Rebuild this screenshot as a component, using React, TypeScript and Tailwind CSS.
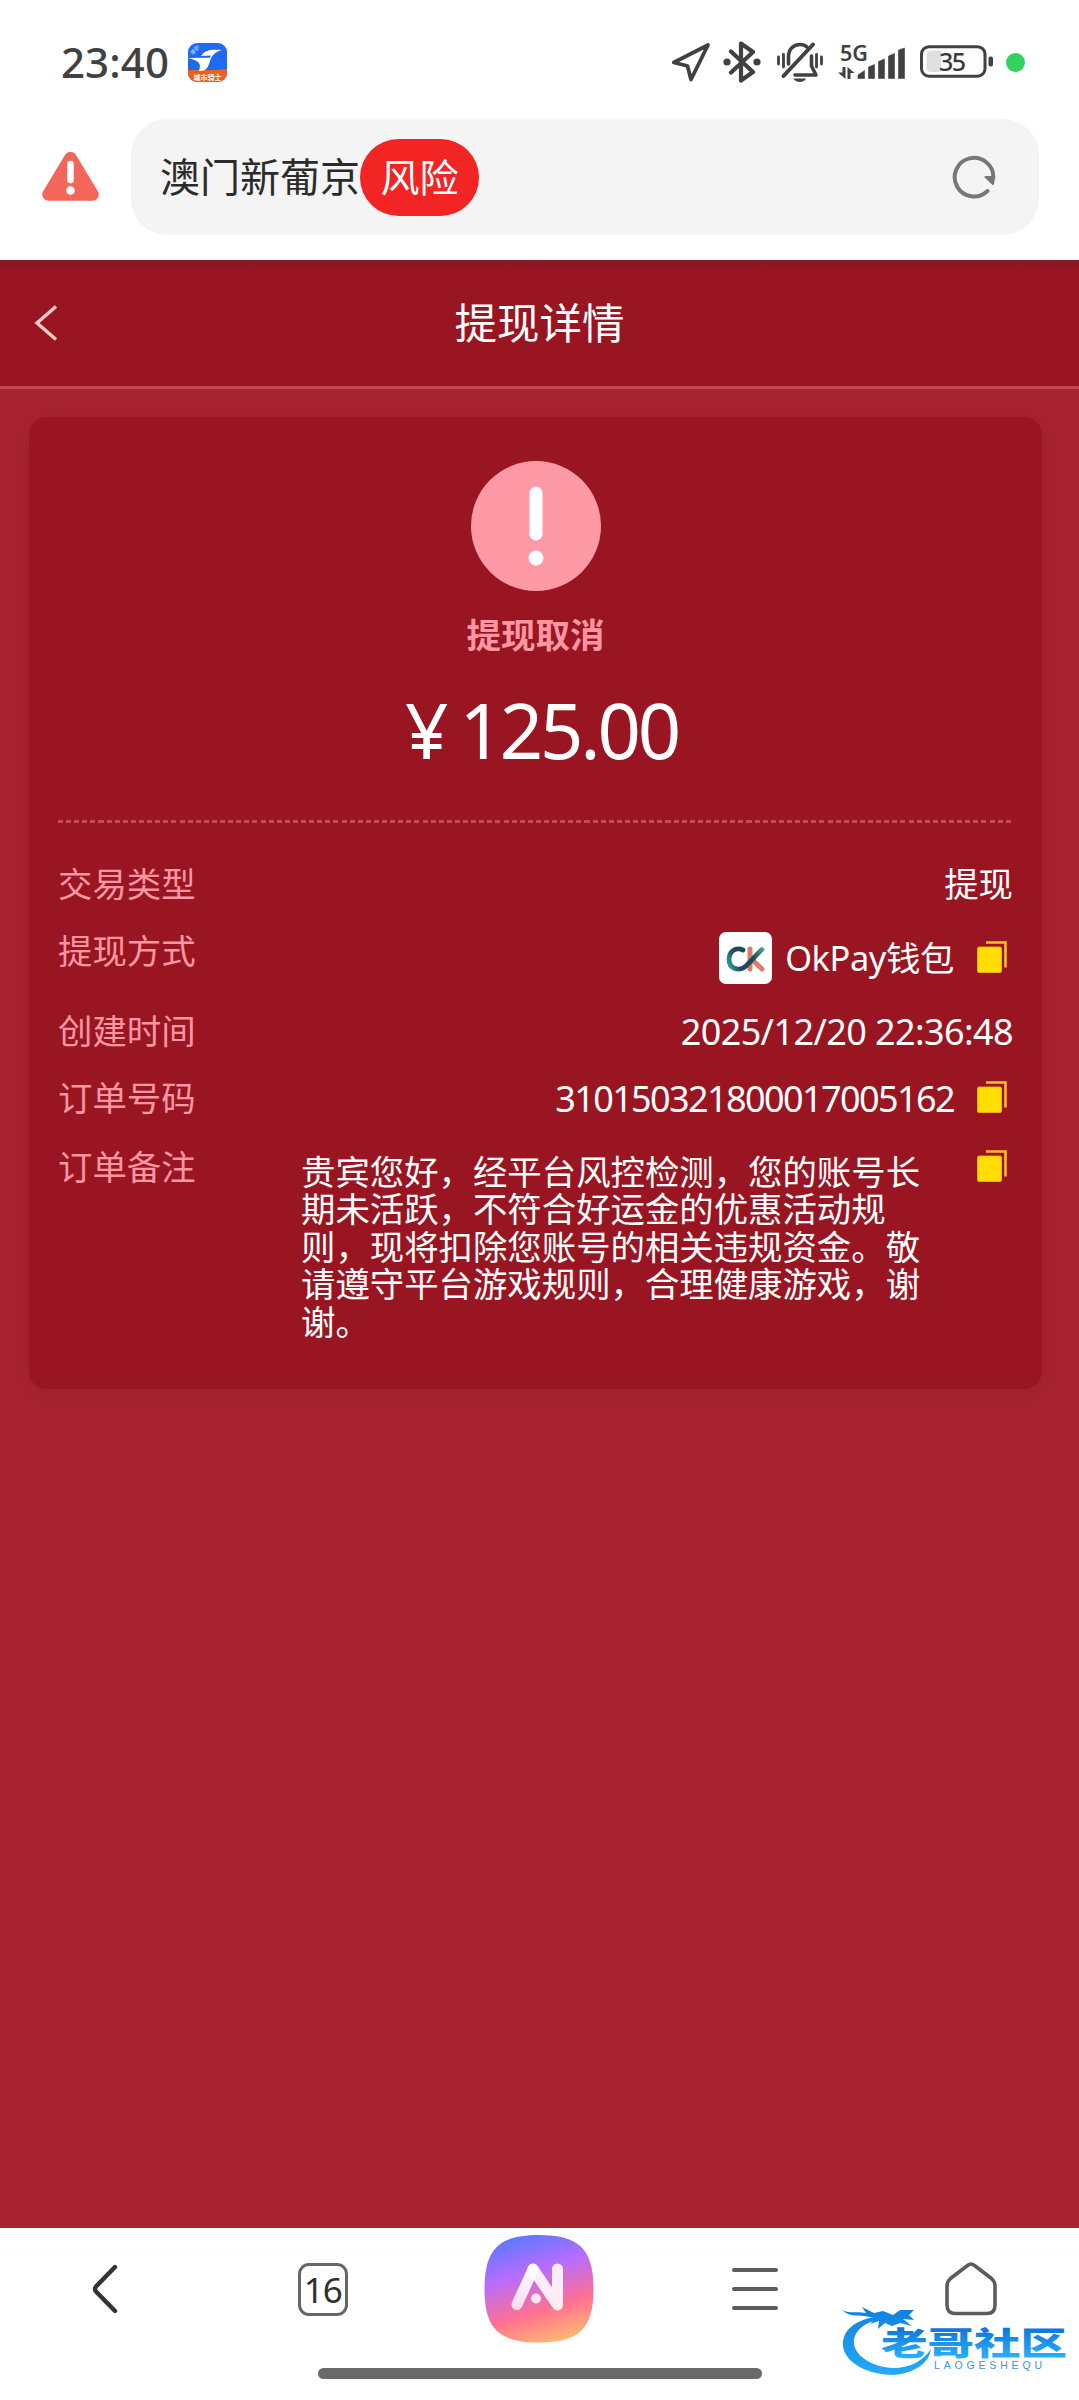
import React from 'react';

const cjk = "font-['Noto_Sans_CJK_SC',sans-serif]";
const latin = "font-['Noto_Sans','Noto_Sans_CJK_SC',sans-serif]";

const DeliveryAppIcon = () => (
  <svg width="39" height="39" viewBox="0 0 39 39">
    <defs>
      <clipPath id="appClip"><rect width="39" height="39" rx="9" /></clipPath>
    </defs>
    <g clipPath="url(#appClip)">
      <rect width="39" height="39" fill="#1d6bf3" />
      <path d="M0 27H27L39 26V39H0Z" fill="#f0601a" />
      <path d="M13 13C17 7 22 6 34 7C27 9 24 12 22 18C20 25 18 28 11 28C13 22 13 18 0 15L14 14.5H22L23 12.5Z" fill="#fff" />
      <path d="M1 14H22" stroke="#1d6bf3" strokeWidth="1.2" />
      <text x="19.5" y="37" textAnchor="middle" fontSize="7" fontWeight="700" fill="#fff" className="font-['Noto_Sans_CJK_SC',sans-serif]">城市骑士</text>
      <text x="7" y="9" textAnchor="middle" fontSize="5.5" fill="#b9d3ff" transform="rotate(-42 7 7)" className="font-['Noto_Sans_CJK_SC',sans-serif]">兼职</text>
    </g>
  </svg>
);

const LocationIcon = () => (
  <svg width="40" height="40" viewBox="0 0 40 40" fill="none" stroke="#414141" strokeWidth="3.8" strokeLinejoin="round">
    <path d="M37 3L2.8 20.5L16.5 24L20 37.5Z" />
  </svg>
);

const BluetoothIcon = () => (
  <svg width="38" height="42" viewBox="0 0 38 42" fill="none" stroke="#414141" strokeWidth="4.2" strokeLinecap="round" strokeLinejoin="round">
    <path d="M8 10.5L30 31L18 39.5V2.5L30 11L8 31.5" />
    <circle cx="4" cy="21" r="3.6" fill="#414141" stroke="none" />
    <circle cx="34" cy="21" r="3.6" fill="#414141" stroke="none" />
  </svg>
);

const MutedBellIcon = () => (
  <svg width="48" height="42" viewBox="0 0 48 42" fill="none" stroke="#414141" strokeWidth="3.6" strokeLinecap="round">
    <path d="M2.5 16V23M7.5 13.5V26M40.5 13.5V26M45.5 16V23" strokeWidth="2.8" />
    <path d="M12.5 23V16C12.5 8 17.5 3.500 24 3.500C27 3.500 29.500 4.500 31 6" />
    <path d="M35.5 15V25L40 34H19" strokeLinejoin="round" />
    <path d="M37 3.5L7.5 35" strokeWidth="4" />
    <path d="M17.5 37.5H30C28.5 42 19 42 17.5 37.5Z" fill="#414141" stroke="none" />
  </svg>
);

const SignalIcon = () => (
  <svg width="68" height="38" viewBox="0 0 68 38" fill="#414141" className="overflow-visible">
    <text x="2" y="17.5" fontSize="22" fontWeight="600" textLength="28" lengthAdjust="spacingAndGlyphs" className="font-['Noto_Sans',sans-serif]">5G</text>
    <path d="M4.500 24H7.500V36L0 29.500H4.500ZM9.500 36V24L16.500 30H12.500V36Z" />
    <path d="M20 35.500V32L26.500 27.500V35.500ZM30.500 24L36.500 21.500V35.500H30.500ZM40.500 18.500L46.500 16V35.500H40.500ZM50.500 13L56.500 10.500V35.500H50.500ZM60.500 7L66.500 5V35.500H60.500Z" stroke="#414141" strokeWidth="0.6" strokeLinejoin="round" />
  </svg>
);

const BatteryIcon = () => (
  <svg width="74" height="34" viewBox="0 0 74 34" className="overflow-visible">
    <rect x="1.5" y="1.7" width="63.5" height="29.5" rx="7.5" fill="#fff" stroke="#414141" strokeWidth="3" />
    <path d="M11 5.500H21V27H11Q6.500 27 6.500 22V11Q6.500 5.500 11 5.500Z" fill="#dfdfdf" />
    <text x="32.5" y="25.500" textAnchor="middle" fontSize="25" fontWeight="500" textLength="27" fill="#3a3a3a" className="font-['Noto_Sans',sans-serif]">35</text>
    <rect x="68.5" y="11.5" width="4.5" height="10" rx="2" fill="#414141" />
  </svg>
);

const WarningIcon = () => (
  <svg width="57" height="50" viewBox="0 0 57 50">
    <path d="M28.5 7L6.500 43.500H50.500Z" fill="#f3665c" stroke="#f3665c" strokeWidth="12.500" strokeLinejoin="round" />
    <path d="M28.5 13V29" stroke="#fff" strokeWidth="6.500" strokeLinecap="round" />
    <circle cx="28.5" cy="39.5" r="4.3" fill="#fff" />
  </svg>
);

const ReloadIcon = () => (
  <svg width="44" height="44" viewBox="0 0 44 44" fill="none" stroke="#777" strokeWidth="4" strokeLinecap="round">
    <path d="M35.5 36A19.300 19.300 0 1 1 41.300 23" />
    <path d="M33.500 22H42L41 29Z" fill="#777" strokeWidth="2" strokeLinejoin="round" />
  </svg>
);

const OkPayIcon = () => (
  <svg width="53" height="52" viewBox="0 0 53 52">
    <defs>
      <linearGradient id="okTeal" x1="8" y1="30" x2="45" y2="14" gradientUnits="userSpaceOnUse">
        <stop offset="0" stopColor="#2f9d90" />
        <stop offset="0.25" stopColor="#20475f" />
        <stop offset="0.65" stopColor="#204a60" />
        <stop offset="1" stopColor="#58b5a0" />
      </linearGradient>
    </defs>
    <rect width="53" height="52" rx="7" fill="#fff" />
    <path d="M31 17V37M33.500 28L43 37" stroke="#dc7c68" strokeWidth="5" strokeLinecap="round" />
    <path d="M24 18C16 14.500 10 20 10 27.500C10 37 20 40 27 34C33 28 38 22 43 17.500" fill="none" stroke="url(#okTeal)" strokeWidth="4.8" strokeLinecap="round" />
  </svg>
);

const CopyIcon = () => (
  <svg width="30" height="32" viewBox="0 0 30 32">
    <rect x="0.5" y="6" width="24" height="25.5" rx="1.5" fill="#fd0" stroke="#f9b81c" strokeWidth="0.8" />
    <path d="M9 1.500H28.500V26.500" fill="none" stroke="#fbbd2e" strokeWidth="2.6" />
  </svg>
);

const AiIcon = () => (
  <svg width="110" height="108" viewBox="0 0 110 108">
    <defs>
      <linearGradient id="aiBg" x1="35" y1="0" x2="68" y2="108" gradientUnits="userSpaceOnUse">
        <stop offset="0" stopColor="#5f78ff" />
        <stop offset="0.33" stopColor="#b56cff" />
        <stop offset="0.7" stopColor="#ff7092" />
        <stop offset="1" stopColor="#ffb671" />
      </linearGradient>
      <linearGradient id="aiLeg" x1="0" y1="30" x2="0" y2="75" gradientUnits="userSpaceOnUse">
        <stop offset="0" stopColor="#fff" />
        <stop offset="1" stopColor="#fff" stopOpacity="0.75" />
      </linearGradient>
    </defs>
    <path d="M55 0C95 0 109.500 14 109.500 54S95 107.500 55 107.500S0.500 94 0.500 54S15 0 55 0Z" fill="url(#aiBg)" />
    <g fill="none" strokeWidth="11" strokeLinecap="round">
      <path d="M49 34L73.500 70V34" stroke="#fff" strokeOpacity="0.88" strokeLinejoin="round" />
      <path d="M33 69.500L49 34.500" stroke="url(#aiLeg)" />
    </g>
    <circle cx="52" cy="63.5" r="5" fill="#ffe6f2" />
  </svg>
);

const HomeIcon = () => (
  <svg width="52" height="54" viewBox="0 0 52 54" fill="none" stroke="#5c5c5c" strokeWidth="3.6">
    <path d="M22.500 3.500Q26 0.800 29.500 3.500L46.500 16.500Q50 19.500 50 24V43Q50 51.500 42 51.500H10Q2 51.500 2 43V24Q2 19.500 5.500 16.500Z" />
  </svg>
);

const DragonLogo = () => (
  <svg width="226" height="76" viewBox="0 0 226 76" className="overflow-visible">
    <defs>
      <linearGradient id="dragon" x1="0" y1="0" x2="0" y2="76" gradientUnits="userSpaceOnUse">
        <stop offset="0" stopColor="#0f7fe0" />
        <stop offset="1" stopColor="#27adfa" />
      </linearGradient>
      <linearGradient id="brand" x1="0" y1="24" x2="0" y2="53" gradientUnits="userSpaceOnUse">
        <stop offset="0" stopColor="#0c78dc" />
        <stop offset="1" stopColor="#2cb0fb" />
      </linearGradient>
    </defs>
    <g fill="url(#dragon)">
      <path d="M32 12C8 16 -1 28 0 41C2 58 25 70 51 70C72 68 86 58 88 44C81 55 68 63 50 63C30 62 13 52 11 39C10 27 20 18 35 15Z" />
      <path d="M-1 5C7 9 15 6 23 8L19 2L31 8L40 6L50 10L57 5L71 5L66 10L71 15L60 14L69 21L57 18L49 21L42 18L35 24L36 16L27 19L33 13L21 11C13 10 7 12 -1 5Z" />
    </g>
    <text x="38" y="50" fontSize="32" fontWeight="900" textLength="186" lengthAdjust="spacingAndGlyphs" fill="url(#brand)" className="font-['Noto_Sans_CJK_SC',sans-serif]">老哥社区</text>
    <text x="91" y="64" fontSize="10.5" textLength="108" fill="#3b94dc" className="font-['Liberation_Sans',sans-serif]">LAOGESHEQU</text>
  </svg>
);

const Row = ({ label, className, labelHeight, children }: {
  label: string;
  className: string;
  labelHeight: string;
  children: React.ReactNode;
}) => (
  <div className={`flex items-start justify-between ${className}`}>
    <span className={`flex items-center pb-[4px] text-[#ff97a2] ${labelHeight}`}>{label}</span>
    {children}
  </div>
);

export default function App() {
  return (
    <div className={`flex h-[2400px] w-[1079px] flex-col overflow-hidden bg-white ${cjk}`}>
      {/* Status bar */}
      <div className="flex h-[119px] items-center justify-between pt-[5px] pr-[54px] pl-[61px] text-[#414141]">
        <div className="flex items-center gap-[20px]">
          <span className={`w-[107px] text-[42px] leading-none font-medium tracking-[0.1px] whitespace-nowrap ${latin}`}>23:40</span>
          <DeliveryAppIcon />
        </div>
        <div className="flex items-center">
          <LocationIcon />
          <span className="ml-[12px]"><BluetoothIcon /></span>
          <span className="ml-[15px]"><MutedBellIcon /></span>
          <span className="ml-[14px]"><SignalIcon /></span>
          <span className="ml-[14px]"><BatteryIcon /></span>
          <span className="ml-[12px] size-[19px] rounded-full bg-[#32d25f]" />
        </div>
      </div>

      {/* Address bar */}
      <div className="flex h-[141px] items-start pl-[42px]">
        <span className="mt-[32px]"><WarningIcon /></span>
        <div className="ml-[32px] flex h-[116px] w-[908px] items-center rounded-[36px] bg-[#f4f4f4] pr-[43px] pl-[29px] text-[40px] leading-none">
          <span className="pb-[4px] text-[#2b2b2b]">澳门新葡京</span>
          <span className="flex h-[77px] w-[119px] items-center justify-center rounded-full bg-[#f22424] pb-[4px] text-[39px] text-white">风险</span>
          <span className="ml-auto"><ReloadIcon /></span>
        </div>
      </div>

      {/* Page */}
      <div className="flex h-[1968px] flex-col bg-[#a6232f]">
        <header className="flex h-[129px] shrink-0 items-center border-b-[3px] border-[#c44252] bg-[#9a1522] bg-linear-to-b from-[#8a1523] to-[#9a1522] to-12% pl-[34px]">
          <svg width="24" height="36" viewBox="0 0 24 36" fill="none" stroke="#ffc9ce" strokeWidth="3.4">
            <path d="M22 1.500L3 18L22 34.500" />
          </svg>
          <h1 className="-ml-[58px] flex-1 pb-[3px] text-center text-[42.5px] leading-none text-white">提现详情</h1>
        </header>

        <main className="mt-[28px] ml-[29px] h-[972px] w-[1013px] rounded-[18px] bg-[#9a1522] px-[29px] shadow-[0_4px_18px_rgba(145,15,30,0.25)]">
          <section className="flex h-[406px] flex-col items-center pt-[44px]">
            <svg width="130" height="130" viewBox="0 0 130 130">
              <circle cx="65" cy="65" r="65" fill="#fe9aa6" />
              <path d="M65 32V73" stroke="#fff" strokeWidth="13" strokeLinecap="round" />
              <circle cx="65" cy="97" r="7.5" fill="#fff" />
            </svg>
            <p className="mt-[25px] text-[34.5px] leading-none font-bold text-[#ff97a2]">提现取消</p>
            <p className={`mt-[41px] ml-[12px] flex items-center text-[76px] leading-none text-white ${latin}`}>
              <span className="mr-[11px]">¥</span>
              <span className="tracking-[-3.2px]">125.00</span>
            </p>
          </section>
          <div className="-mt-[3px] h-[3px] bg-[repeating-linear-gradient(90deg,#c8485a_0_5px,transparent_5px_8.1px)]" />

          <section className="pt-[28px] text-[34.4px] leading-none text-white">
            <Row label="交易类型" className="h-[67px]" labelHeight="h-[66px]">
              <span className="flex h-[66px] items-center pb-[4px]">提现</span>
            </Row>
            <Row label="提现方式" className="h-[80px]" labelHeight="h-[66px]">
              <span className="flex h-[80px] items-center pr-[6px]">
                <OkPayIcon />
                <span className={`ml-[13px] tracking-[-0.4px] ${latin}`}>OkPay钱包</span>
                <span className="-mt-[3px] ml-[23px]"><CopyIcon /></span>
              </span>
            </Row>
            <Row label="创建时间" className="h-[67px]" labelHeight="h-[66px]">
              <span className={`flex h-[66px] items-center pt-[1px] text-[36px] tracking-[-0.6px] ${latin}`}>2025/12/20 22:36:48</span>
            </Row>
            <Row label="订单号码" className="h-[67px]" labelHeight="h-[66px]">
              <span className="flex h-[66px] items-center pr-[6px]">
                <span className={`pt-[1px] text-[36px] tracking-[-1.6px] ${latin}`}>310150321800017005162</span>
                <span className="-mt-[3px] ml-[23px]"><CopyIcon /></span>
              </span>
            </Row>
            <Row label="订单备注" className="h-[220px]" labelHeight="h-[70px]">
              <span className="flex items-start pr-[6px]">
                <p className="mt-[20px] w-[621px] leading-[37.4px]">
                  贵宾您好，经平台风控检测，您的账号长期未活跃，不符合好运金的优惠活动规则，现将扣除您账号的相关违规资金。敬请遵守平台游戏规则，合理健康游戏，谢谢。
                </p>
                <span className="mt-[18px] ml-[55px]"><CopyIcon /></span>
              </span>
            </Row>
          </section>
        </main>
      </div>

      {/* Browser toolbar */}
      <nav className="relative h-[172px] bg-white">
        <div className="grid h-[122px] grid-cols-5 place-items-center">
          <svg width="26" height="50" viewBox="0 0 26 50" fill="none" stroke="#333" strokeWidth="4.4" strokeLinecap="round" className="mr-[5px]">
            <path d="M23 3L4 22.500Q2 25 4 27.500L23 47" />
          </svg>
          <span className={`mr-[2px] flex h-[53px] w-[50px] items-center justify-center rounded-[11px] border-[3.5px] border-[#666] text-[35px] leading-none tracking-[-1px] text-[#2f2f2f] ${latin}`}>16</span>
          <AiIcon />
          <div className="flex flex-col gap-[15px]">
            <span className="h-[4px] w-[46px] rounded-full bg-[#5c5c5c]" />
            <span className="h-[4px] w-[46px] rounded-full bg-[#5c5c5c]" />
            <span className="h-[4px] w-[46px] rounded-full bg-[#5c5c5c]" />
          </div>
          <HomeIcon />
        </div>
        <div className="mx-auto mt-[18px] h-[11px] w-[444px] rounded-full bg-[#696969]" />
        <div className="absolute top-[77px] left-[843px]"><DragonLogo /></div>
      </nav>
    </div>
  );
}
